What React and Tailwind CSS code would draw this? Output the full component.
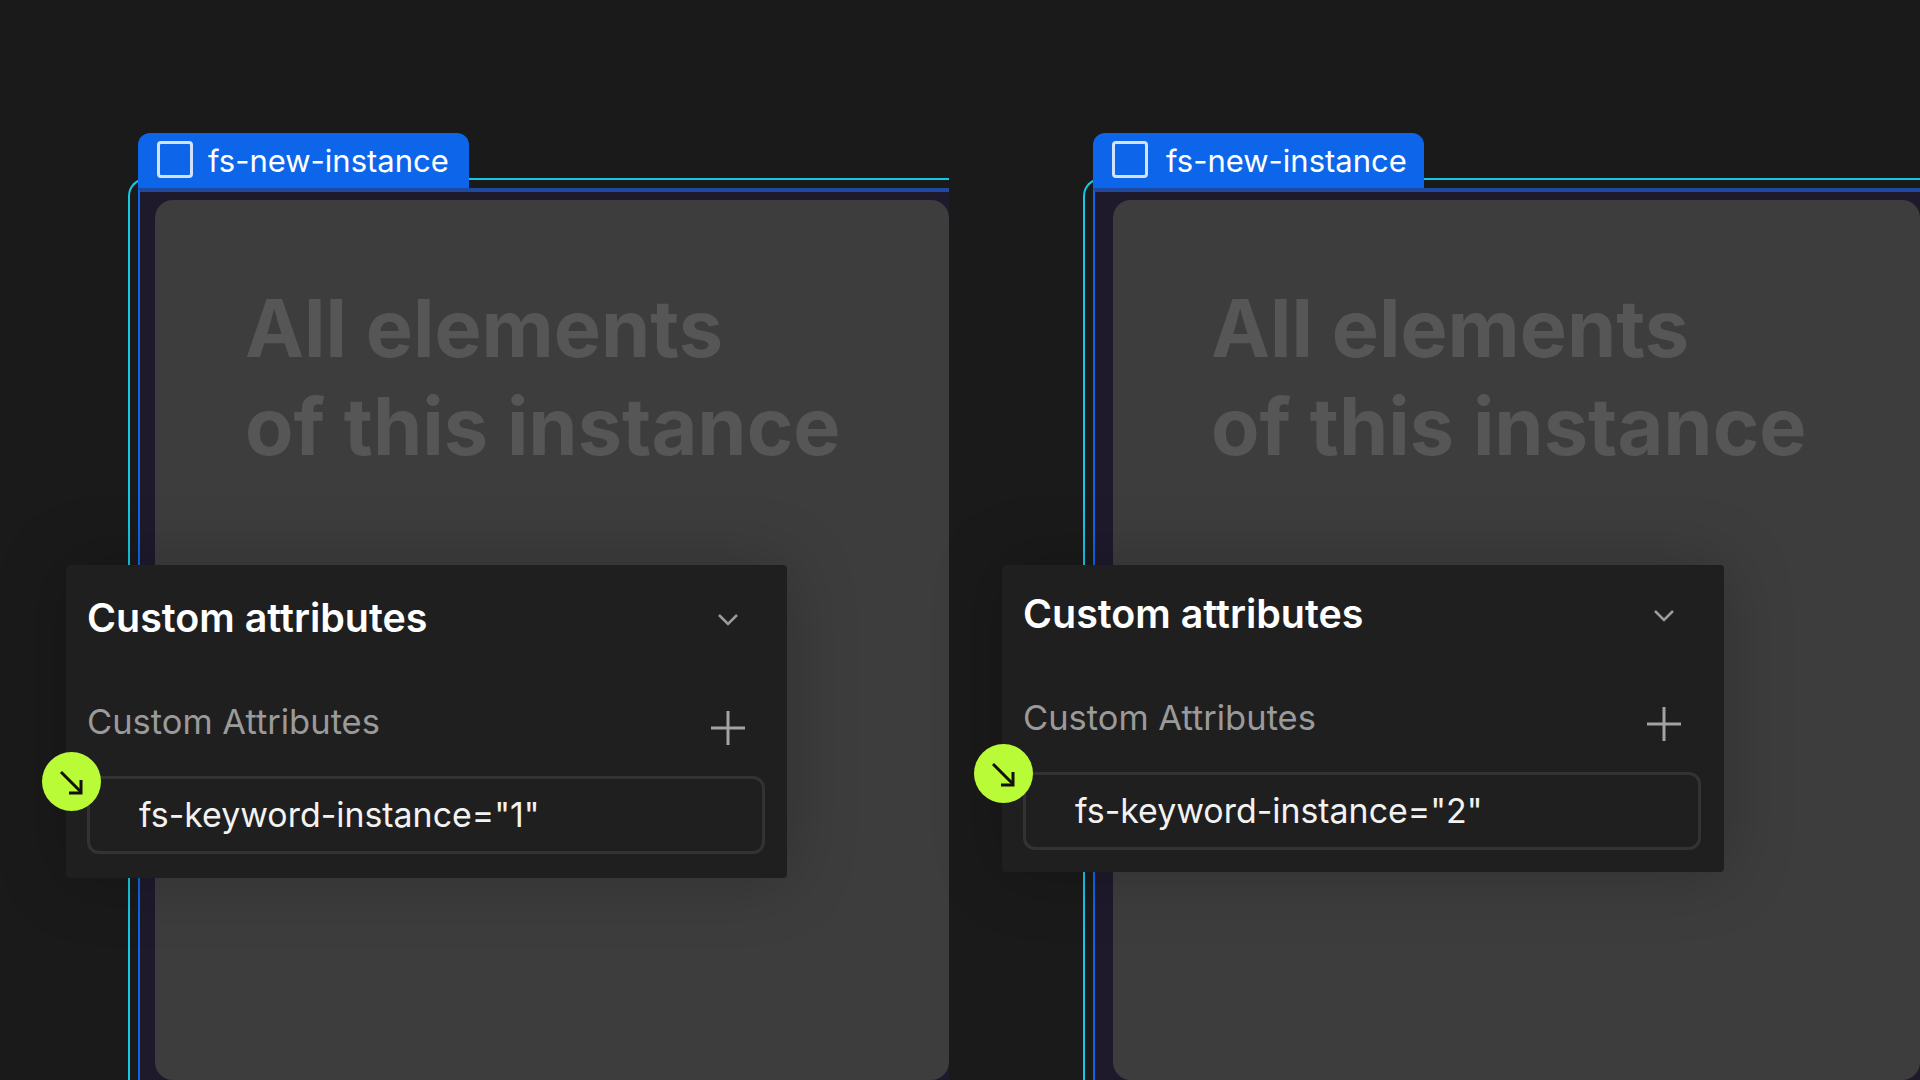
function ArrowBadge({ className }) {
    return (
        <div className={`absolute w-[59px] h-[59px] rounded-full bg-[#b9fb36] flex items-center justify-center z-20 ${className}`}>
            <svg width="59" height="59" viewBox="0 0 59 59" fill="none" stroke="#111" strokeWidth="3">
                <path d="M19 20 L39 40" />
                <path d="M39 28 V41 H27" />
            </svg>
        </div>
    );
}

function AttributesPanel({ value, className, badgeClass }) {
    return (
        <div className={`absolute bg-[#1f1f1f] rounded-[4px] shadow-[0_0_70px_rgba(0,0,0,0.22)] z-10 ${className}`}>
            <ArrowBadge className={badgeClass} />
            <div className="flex items-center justify-between h-[44px]">
                <span className="text-[39.4px] font-semibold text-white">Custom attributes</span>
                <svg className="mt-[2px] mr-[20px]" width="34" height="14" viewBox="0 0 34 14" fill="none" stroke="#9c9c9c" strokeWidth="2.5">
                    <path d="M8 2 L17 11 L26 2" />
                </svg>
            </div>
            <div className="flex items-center justify-between h-[44px] mt-[59px]">
                <span className="text-[34.5px] text-[#9a9a9a]">Custom Attributes</span>
                <svg className="mt-[11px] mr-[20px]" width="34" height="34" viewBox="0 0 34 34" fill="none" stroke="#a3a3a3" strokeWidth="3">
                    <path d="M17 0 V34 M0 17 H34" />
                </svg>
            </div>
            <div className="h-[78px] mt-[32px] border-[3px] border-[#333333] rounded-[12px] flex items-center pl-[49px] text-[33.9px] text-[#f2f2f2]">
                {value}
            </div>
        </div>
    );
}

function Instance({ className, tagTextClass, navyClass, headingClass, children }) {
    return (
        <section className={`relative flex flex-col ${className}`}>
            <div className="relative z-[5] ml-[10px] -mb-[10px] w-[331px] h-[55px] shrink-0 bg-[#0d66ea] rounded-t-[12px] flex items-start">
                <div className="mt-[8px] ml-[19px] w-[36px] h-[37px] border-[3px] border-[#d3e2fc] rounded-[4px] shrink-0"></div>
                <span className={`mt-[9px] text-[31px] leading-[38px] text-white ${tagTextClass}`}>fs-new-instance</span>
            </div>
            <div className="flex-1 flex flex-col border-l-2 border-t-2 border-[#14c8e6] rounded-tl-[18px] pl-[8px] pt-[8px]">
                <div className={`flex-1 flex flex-col border-l-2 border-t-4 border-l-[#0d66ea] border-t-[#1f48a0] bg-[#1e1a2c] pt-[8px] ${navyClass}`}>
                    <div className={`flex-1 bg-[#3d3d3d] rounded-[18px] pt-[79px] ${headingClass}`}>
                        <h2 className="text-[79.2px] leading-[98px] font-bold text-[#565656]">
                            All elements<br />of this instance
                        </h2>
                    </div>
                </div>
            </div>
            {children}
        </section>
    );
}

export default function App() {
    return (
        <div className="w-full h-[1080px] overflow-hidden bg-[#1a1a1a] flex gap-[134px] pl-[128px] pt-[133px] [font-family:Inter,sans-serif]">
            <Instance className="w-[821px] shrink-0" tagTextClass="ml-[15px]" navyClass="pl-[15px]" headingClass="pl-[90px]">
                <AttributesPanel
                    value={'fs-keyword-instance="1"'}
                    className="left-[-62px] top-[432px] w-[721px] pl-[21px] pr-[22px] pt-[32px] pb-[24px]"
                    badgeClass="left-[-24px] top-[187px]"
                />
            </Instance>
            <Instance className="flex-1" tagTextClass="ml-[18px]" navyClass="pl-[18px]" headingClass="pl-[98px]">
                <AttributesPanel
                    value={'fs-keyword-instance="2"'}
                    className="left-[-81px] top-[432px] w-[722px] pl-[21px] pr-[23px] pt-[28px] pb-[22px]"
                    badgeClass="left-[-28px] top-[179px]"
                />
            </Instance>
        </div>
    );
}
